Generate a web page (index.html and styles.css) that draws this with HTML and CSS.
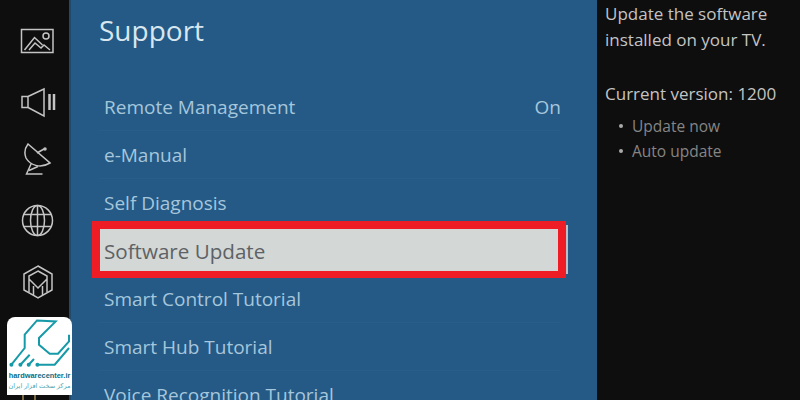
FILE: index.html
```html
<!DOCTYPE html>
<html lang="en">
<head>
	<meta charset="UTF-8">
	<title>Support</title>
	<link rel="stylesheet" href="styles.css">
</head>
<body>
	<div class="screen">
		<div class="side">
			<svg class="icon" viewBox="0 0 36 36"><path d="M1.5 6.5H33v23H1.5z"/><path d="M4.5 27l10-12.5 8 7.500M9 27l6-7 6 5 3-3 6 5"/><circle cx="26" cy="13" r="3"/></svg>
			<svg class="icon" viewBox="0 0 36 36"><path d="M2 13.500h6v11H2zM8 13.500L24 6v27L8 24.500z"/><path class="bar" d="M29.500 11v16M34 11v16"/></svg>
			<svg class="icon" viewBox="0 0 36 36"><path d="M8 1l22 19c-10 6-20 2-24-5-2-5-1-10 2-14z"/><path d="M17 10l7-4"/><circle cx="25" cy="6" r="1"/><path d="M11.500 20l-5 11h16M9 27.500l9-4"/></svg>
			<svg class="icon" viewBox="0 0 36 36"><circle cx="17.500" cy="17.500" r="15"/><ellipse cx="17.500" cy="17.500" rx="7" ry="15"/><path d="M4 11.500h27M4 23.500h27M17.500 2.500v30"/></svg>
			<svg class="icon" viewBox="0 0 36 36"><path d="M18 3l14 8v16l-14 8-14-8V11z"/><path d="M18 8l9 5v3l-9 9-9-9v-3zM9 16v13M27 16v13M13.500 32v-9M22.500 32v-9"/></svg>
			<svg class="icon" viewBox="0 0 36 36"><path d="M4 6h28v24H4z"/></svg>
			<svg class="icon tan" viewBox="0 0 36 36"><path d="M3 12v24M15 12v24M8 24l-3 12"/></svg>
		</div>
		<div class="main">
			<h1 class="title">Support</h1>
			<ul class="menu">
				<li class="row"><span>Remote Management</span><span>On</span></li>
				<li class="row"><span>e-Manual</span></li>
				<li class="row"><span>Self Diagnosis</span></li>
				<li class="row selected"><span>Software Update</span></li>
				<li class="row"><span>Smart Control Tutorial</span></li>
				<li class="row"><span>Smart Hub Tutorial</span></li>
				<li class="row"><span>Voice Recognition Tutorial</span></li>
			</ul>
		</div>
		<div class="info">
			<p class="desc">Update the software installed on your TV.</p>
			<p class="version">Current version: 1200</p>
			<ul class="links">
				<li>Update now</li>
				<li>Auto update</li>
			</ul>
		</div>
		<div class="logo">
			<svg class="logo-mark" viewBox="0 0 65 52">
				<path d="M4.400 47.700L17.700 31V17.700L30 3.400l18.700 1L32 21v6.700l10.700 9H51l11-12.400v-6.600"/>
				<path d="M13.400 47.700l9.300-10M21.700 47.700l5.300-5.700M30.400 47.700h17.300L62 31"/>
				<circle cx="4.400" cy="47.700" r="2"/><circle cx="13.400" cy="47.700" r="2"/><circle cx="21.700" cy="47.700" r="2"/><circle cx="30.400" cy="47.700" r="2"/>
			</svg>
			<div class="logo-name">hardwarecenter.ir</div>
			<div class="logo-fa" dir="rtl">مرکز سخت افزار ایران</div>
		</div>
	</div>
</body>
</html>
```

FILE: styles.css
```css
*{
	margin: 0;
	padding: 0;
	box-sizing: border-box;
}
body{
	width: 800px;
	height: 400px;
	overflow: hidden;
	background-color: #0e0e0e;
	font-family: "Open Sans", "Noto Sans", sans-serif;
}
.screen{
	display: flex;
	position: relative;
	width: 800px;
	height: 400px;
	overflow: hidden;
}
.side{
	width: 69px;
	height: 400px;
	overflow: hidden;
	display: flex;
	flex-direction: column;
	gap: 24px;
	padding: 23px 0 0 20px;
}
.icon{
	flex-shrink: 0;
	width: 36px;
	height: 36px;
	fill: none;
	stroke: #c4c4c4;
	stroke-width: 1.5;
}
.icon .bar{
	stroke-width: 2.5;
}
.icon.tan{
	stroke: #a08a55;
}
.main{
	width: 528px;
	background-color: #245a85;
	border-left: 2px solid #1d4a6d;
	padding: 12px 36px 0 28px;
}
.title{
	font-size: 28px;
	font-weight: 400;
	color: #d8e6ef;
	line-height: 36px;
	margin-bottom: 35px;
}
.menu{
	list-style: none;
}
.row{
	display: flex;
	justify-content: space-between;
	align-items: center;
	height: 48px;
	padding-left: 5px;
	font-size: 19px;
	color: #a6c6dc;
	border-bottom: 1px solid rgba(255,255,255,.025);
}
.selected{
	position: relative;
	height: 57px;
	margin: -6px -5px -3px -7px;
	background-color: #d3d7d6;
	border: 8px solid #ee1c25;
	border-bottom-width: 7px;
	padding: 1px 0 0 4px;
	font-size: 20.600px;
	color: #5d6265;
}
.selected::after{
	content: "";
	position: absolute;
	right: -10px;
	top: -4px;
	width: 2px;
	height: 49px;
	background-color: #b9c0c6;
}
.info{
	flex: 1;
	padding: 1px 8px 0 8px;
	font-size: 17px;
	line-height: 26px;
	color: #c4c4c4;
}
.desc{
	margin-bottom: 28px;
}
.links{
	list-style: none;
	font-size: 15.500px;
	line-height: 25px;
	margin-top: 7px;
	color: #858585;
}
.links li{
	position: relative;
	padding-left: 27px;
}
.links li::before{
	content: "";
	position: absolute;
	left: 14px;
	top: 10px;
	width: 4px;
	height: 4px;
	border-radius: 50%;
	background-color: #aaa;
}
.logo{
	position: absolute;
	left: 7px;
	top: 317px;
	width: 65px;
	height: 78px;
	background-color: #fff;
	border-radius: 8px 8px 0 0;
	text-align: center;
}
.logo-mark{
	display: block;
	width: 65px;
	height: 52px;
	fill: none;
	stroke: #169aa8;
	stroke-width: 2;
}
.logo-mark circle{
	fill: #169aa8;
	stroke: none;
}
.logo-name{
	font-family: "Liberation Sans", sans-serif;
	font-size: 7.400px;
	font-weight: 700;
	color: #0b6e86;
	line-height: 11px;
	margin-top: 1px;
	white-space: nowrap;
}
.logo-fa{
	font-family: "Noto Sans", "DejaVu Sans", sans-serif;
	font-size: 6.500px;
	color: #4aa7b5;
	line-height: 10px;
	white-space: nowrap;
}
```
